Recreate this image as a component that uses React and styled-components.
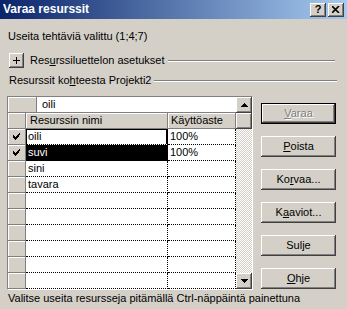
import React from 'react';
import styled, {createGlobalStyle} from 'styled-components';

const GlobalStyle = createGlobalStyle`
  html, body {
    margin: 0;
    padding: 0;
    background: #D4D0C8;
  }
  body {
    font-family: "Liberation Sans", Arial, sans-serif;
    font-size: 11px;
  }
`

const Window = styled.div`
  width: 347px;
  height: 309px;
  background: #D4D0C8;
  color: #000;
  line-height: 13px;
  display: flex;
  flex-direction: column;
  overflow: hidden;
`
const TitleBar = styled.div`
  height: 19px;
  display: flex;
  align-items: center;
  justify-content: space-between;
  padding: 0 3px;
  background: linear-gradient(to right, #0A246A, #A6CAF0);
  color: #fff;
  font-weight: bold;
  font-size: 12px;
`
const TitleButtons = styled.div`
  display: flex;
  gap: 2px;
`
const TitleButton = styled.div`
  width: 16px;
  height: 14px;
  box-sizing: border-box;
  background: #D4D0C8;
  box-shadow: inset -1px -1px #404040, inset 1px 1px #fff, inset -2px -2px #808080;
  display: flex;
  align-items: center;
  justify-content: center;
  color: #000;
  font-size: 11px;
  font-weight: bold;
`
const Body = styled.div`
  display: flex;
  flex-direction: column;
  padding-left: 8px;
`
const Intro = styled.div`
  margin-top: 11px;
`
const SectionRow = styled.div`
  display: flex;
  align-items: center;
  margin-top: ${p => p.$mt}px;
  margin-right: ${p => p.$mr}px;
  padding-left: ${p => p.$pl || 0}px;
`
const ExpandButton = styled.div`
  width: 15px;
  height: 15px;
  box-sizing: border-box;
  margin-right: 6px;
  background: #D4D0C8;
  box-shadow: inset -1px -1px #404040, inset 1px 1px #fff, inset -2px -2px #808080;
  display: flex;
  align-items: center;
  justify-content: center;
`
const Etched = styled.div`
  flex: 1;
  margin-left: ${p => p.$ml}px;
  border-top: 1px solid #808080;
  border-bottom: 1px solid #fff;
`
const Key = styled.span`
  text-decoration: underline;
`
const Main = styled.div`
  display: flex;
  gap: 8px;
  margin-top: 9px;
  margin-left: -1px;
`
const GridFrame = styled.div`
  width: 246px;
  box-sizing: border-box;
  display: flex;
  border-top: 1px solid #808080;
  border-left: 1px solid #808080;
  border-right: 1px solid #fff;
  border-bottom: 1px solid #fff;
`
const TableArea = styled.div`
  width: 228px;
  display: flex;
  flex-direction: column;
  background: #fff;
`
const Row = styled.div`
  display: flex;
  height: 16px;
`
const RaisedCell = styled.div`
  width: ${p => p.$w}px;
  height: 16px;
  box-sizing: border-box;
  background: #D4D0C8;
  border-right: 1px solid #808080;
  border-bottom: 1px solid #808080;
  box-shadow: inset 1px 1px #fff;
  padding-left: ${p => p.$pl || 0}px;
  display: flex;
  align-items: center;
  justify-content: ${p => p.$center ? 'center' : 'flex-start'};
  white-space: nowrap;
`
const SearchInput = styled.div`
  flex: 1;
  height: 16px;
  box-sizing: border-box;
  padding-left: 5px;
  border-bottom: 1px solid #808080;
  display: flex;
  align-items: center;
`
const DataCell = styled.div`
  width: ${p => p.$w}px;
  height: 16px;
  box-sizing: border-box;
  padding-left: 2px;
  display: flex;
  align-items: center;
  white-space: nowrap;
  background: ${p => p.$selected ? '#000' : '#fff'};
  color: ${p => p.$selected ? '#fff' : '#000'};
  border-right: ${p => p.$focus ? '2px solid #000' : '1px dotted #000'};
  border-bottom: 1px dotted #000;
  box-shadow: ${p => p.$focus ? 'inset 1px 1px #000' : 'none'};
`
const ScrollBar = styled.div`
  width: 16px;
  display: flex;
  flex-direction: column;
`
const ScrollButton = styled.div`
  width: 16px;
  height: 16px;
  box-sizing: border-box;
  background: #D4D0C8;
  box-shadow: inset -1px -1px #404040, inset 1px 1px #fff, inset -2px -2px #808080, inset 2px 2px #D4D0C8;
  display: flex;
  align-items: center;
  justify-content: center;
`
const Track = styled.div`
  flex: 1;
  background-image: conic-gradient(#fff 25%, #D4D0C8 0 50%, #fff 0 75%, #D4D0C8 0);
  background-size: 2px 2px;
`
const ButtonColumn = styled.div`
  display: flex;
  flex-direction: column;
  gap: 12px;
  padding-top: 7px;
`
const Button = styled.div`
  width: 75px;
  height: 21px;
  box-sizing: border-box;
  background: #D4D0C8;
  display: flex;
  align-items: center;
  justify-content: center;
  color: ${p => p.$disabled ? '#808080' : '#000'};
  text-shadow: ${p => p.$disabled ? '1px 1px 0 #fff' : 'none'};
  box-shadow: ${p => p.$default
    ? 'inset 0 0 0 1px #000, inset -2px -2px #404040, inset 2px 2px #fff, inset -3px -3px #808080'
    : 'inset -1px -1px #404040, inset 1px 1px #fff, inset -2px -2px #808080'};
`
const Footer = styled.div`
  margin-top: 2px;
`

// bitmap-style check mark, as drawn in the row selector
const Check = () => (
    <svg width="7" height="7" viewBox="0 0 7 7" shapeRendering="crispEdges">
        <path d="M6 0h1v2h-1zM5 1h1v3h-1zM4 2h1v3h-1zM3 3h1v3h-1zM0 2h1v3h-1zM1 3h1v3h-1zM2 4h1v3h-1z" fill="#000"/>
    </svg>
)

const rows = [
    {name: 'oili', use: '100%', checked: true, focus: true},
    {name: 'suvi', use: '100%', checked: true, selected: true},
    {name: 'sini'},
    {name: 'tavara'},
    {}, {}, {}, {}, {}, {},
]

const App = () => {
    return (
        <Window>
            <GlobalStyle/>
            <TitleBar>
                <span>Varaa resurssit</span>
                <TitleButtons>
                    <TitleButton>?</TitleButton>
                    <TitleButton>
                        <svg width="8" height="7" viewBox="0 0 8 7">
                            <path d="M0 0L7 7M7 0L0 7" stroke="#000" strokeWidth="1.6"/>
                        </svg>
                    </TitleButton>
                </TitleButtons>
            </TitleBar>
            <Body>
                <Intro>Useita tehtäviä valittu (1;4;7)</Intro>
                <SectionRow $mt={10} $mr={12} $pl={1}>
                    <ExpandButton>
                        <svg width="7" height="7" viewBox="0 0 7 7">
                            <path d="M3 0h1v7h-1zM0 3h7v1h-7z" fill="#000"/>
                        </svg>
                    </ExpandButton>
                    <span>Res<Key>u</Key>rssiluettelon asetukset</span>
                    <Etched $ml={3}/>
                </SectionRow>
                <SectionRow $mt={6} $mr={10} $pl={1}>
                    <span>Resurssit ko<Key>h</Key>teesta Projekti2</span>
                    <Etched $ml={3}/>
                </SectionRow>
                <Main>
                    <GridFrame>
                        <TableArea>
                            <Row>
                                <RaisedCell $w={29}/>
                                <SearchInput>oili</SearchInput>
                            </Row>
                            <Row>
                                <RaisedCell $w={18}/>
                                <RaisedCell $w={142} $pl={4}>Resurssin nimi</RaisedCell>
                                <RaisedCell $w={68} $pl={3}>Käyttöaste</RaisedCell>
                            </Row>
                            {rows.map((row, i) => (
                                <Row key={i}>
                                    <RaisedCell $w={18} $center>{row.checked && <Check/>}</RaisedCell>
                                    <DataCell $w={142} $focus={row.focus} $selected={row.selected}>{row.name}</DataCell>
                                    <DataCell $w={68}>{row.use}</DataCell>
                                </Row>
                            ))}
                        </TableArea>
                        <ScrollBar>
                            <ScrollButton>
                                <svg width="7" height="4" viewBox="0 0 7 4">
                                    <path d="M3 0h1v1h1v1h1v1h1v1h-7v-1h1v-1h1v-1h1z" fill="#000"/>
                                </svg>
                            </ScrollButton>
                            <ScrollButton/>
                            <Track/>
                            <ScrollButton>
                                <svg width="7" height="4" viewBox="0 0 7 4">
                                    <path d="M0 0h7v1h-1v1h-1v1h-1v1h-1v-1h-1v-1h-1v-1h-1z" fill="#000"/>
                                </svg>
                            </ScrollButton>
                        </ScrollBar>
                    </GridFrame>
                    <ButtonColumn>
                        <Button $default $disabled><span><Key>V</Key>araa</span></Button>
                        <Button><span><Key>P</Key>oista</span></Button>
                        <Button><span>Ko<Key>r</Key>vaa...</span></Button>
                        <Button><span>K<Key>a</Key>aviot...</span></Button>
                        <Button><span>Sulje</span></Button>
                        <Button><span><Key>O</Key>hje</span></Button>
                    </ButtonColumn>
                </Main>
                <Footer>Valitse useita resursseja pitämällä Ctrl-näppäintä painettuna</Footer>
            </Body>
        </Window>
    );
};

export default App;
